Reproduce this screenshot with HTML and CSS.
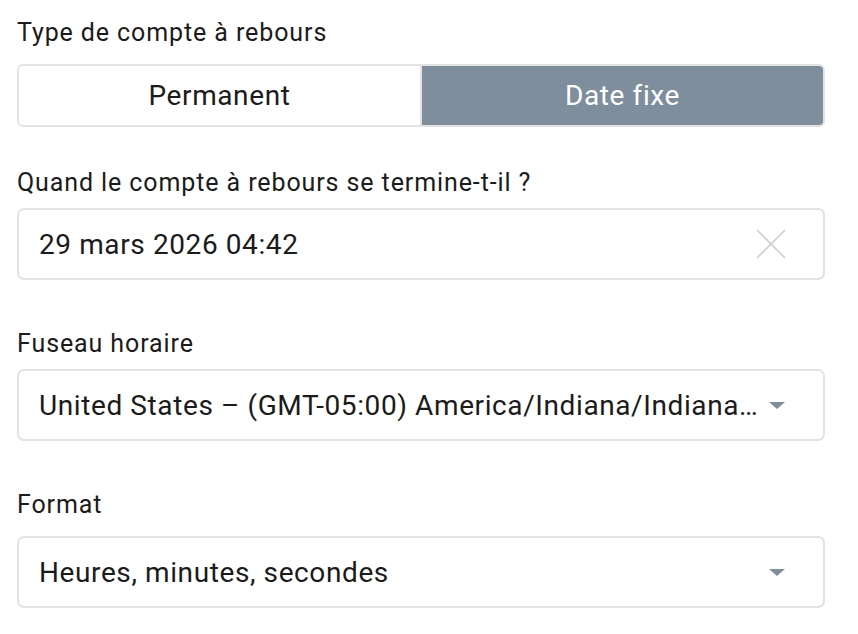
FILE: index.html
```html
<!DOCTYPE html>
<html lang="fr">
<head>
<meta charset="utf-8">
<title>Compte à rebours</title>
<link rel="stylesheet" href="styles.css">
</head>
<body>
<div class="form">
  <div class="field field-first">
    <div class="label label-wide">Type de compte à rebours</div>
    <div class="segmented">
      <div class="seg">Permanent</div>
      <div class="seg seg-active">Date fixe</div>
    </div>
  </div>

  <div class="field field-after-segment">
    <div class="label">Quand le compte à rebours se termine-t-il ?</div>
    <div class="control">
      <span class="value">29 mars 2026 04:42</span>
      <svg class="clear" width="30" height="30" viewBox="0 0 30 30" aria-hidden="true">
        <path d="M1 1 L29 29 M29 1 L1 29" stroke="#cfcfcf" stroke-width="1.6" fill="none"/>
      </svg>
    </div>
  </div>

  <div class="field">
    <div class="label">Fuseau horaire</div>
    <div class="control">
      <span class="value">United States – (GMT-05:00) America/Indiana/Indianapolis</span>
      <span class="caret"></span>
    </div>
  </div>

  <div class="field">
    <div class="label label-wide">Format</div>
    <div class="control">
      <span class="value">Heures, minutes, secondes</span>
      <span class="caret"></span>
    </div>
  </div>
</div>
</body>
</html>
```

FILE: styles.css
```css
* { box-sizing: border-box; }

html, body {
  margin: 0;
  padding: 0;
  background: #ffffff;
}

body {
  font-family: Roboto, "Noto Sans", sans-serif;
  color: #1b1b1b;
}

.form {
  width: 808px;
  margin-left: 17px;
  padding-top: 19px;
  display: flex;
  flex-direction: column;
}

.field {
  display: flex;
  flex-direction: column;
  margin-top: 50px;
}

.field-first {
  margin-top: 0;
}

.field-after-segment {
  margin-top: 42px;
}

.label {
  font-size: 25px;
  letter-spacing: 0.9px;
  line-height: 28px;
  margin-bottom: 11px;
}

.label-wide {
  margin-bottom: 17px;
}

.segmented {
  display: flex;
  height: 63px;
  border: 2px solid #e3e3e3;
  border-radius: 6px;
  overflow: hidden;
}

.seg {
  flex: 1;
  display: flex;
  align-items: center;
  justify-content: center;
  font-size: 28px;
  letter-spacing: 0.6px;
  color: #1b1b1b;
  background: #ffffff;
}

.seg-active {
  background: #7f8e9d;
  color: #ffffff;
  border-left: 2px solid #e3e3e3;
}

.control {
  height: 72px;
  border: 2px solid #e3e3e3;
  border-radius: 7px;
  display: flex;
  align-items: center;
  padding: 0 36px 0 20px;
  gap: 10px;
}

.value {
  flex: 1;
  min-width: 0;
  font-size: 28px;
  letter-spacing: 0.6px;
  white-space: nowrap;
  overflow: hidden;
  text-overflow: ellipsis;
  color: #1b1b1b;
}

.clear {
  flex: none;
  margin-right: 1px;
}

.caret {
  flex: none;
  width: 0;
  height: 0;
  border-left: 8px solid transparent;
  border-right: 8px solid transparent;
  border-top: 7px solid #7f8e9d;
  margin: 0 2px 0 0;
}
```
